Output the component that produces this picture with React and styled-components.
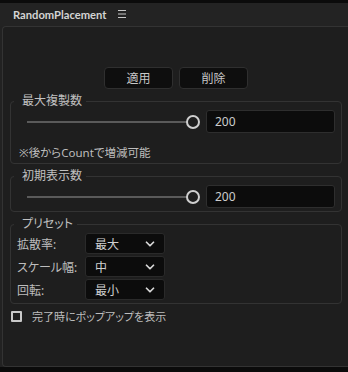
import styled, { createGlobalStyle } from "styled-components";
import { ChevronDown } from "lucide-react";

const GlobalStyle = createGlobalStyle`
  html, body {
    margin: 0;
    padding: 0;
    background: #0b0b0b;
    overflow: hidden;
  }
  * {
    box-sizing: border-box;
  }
`;

const presets = [
  { label: "拡散率:", value: "最大" },
  { label: "スケール幅:", value: "中" },
  { label: "回転:", value: "最小" },
];

function App() {
  return (
    <>
      <GlobalStyle />
      <StyledRoot>
        <StyledTopStrip />
        <StyledHeader>
          <StyledTitle>RandomPlacement</StyledTitle>
          <StyledMenuIcon viewBox="0 0 8 8">
            <path d="M0 0.5H8M0 4H8M0 7.5H8" stroke="#c8c8c8" strokeWidth="1" />
          </StyledMenuIcon>
        </StyledHeader>
        <StyledPanel>
          <StyledButtonRow>
            <StyledButton>適用</StyledButton>
            <StyledButton>削除</StyledButton>
          </StyledButtonRow>

          <StyledFieldset $pb={2}>
            <StyledLegend>最大複製数</StyledLegend>
            <SliderRow />
            <StyledNote>※後からCountで増減可能</StyledNote>
          </StyledFieldset>

          <StyledFieldset $pb={3}>
            <StyledLegend>初期表示数</StyledLegend>
            <SliderRow />
          </StyledFieldset>

          <StyledFieldset $pb={3}>
            <StyledLegend>プリセット</StyledLegend>
            <StyledPresetList>
              {presets.map((p) => (
                <StyledPresetRow key={p.label}>
                  <StyledPresetLabel>{p.label}</StyledPresetLabel>
                  <StyledSelect>
                    <span>{p.value}</span>
                    <ChevronDown size={14} strokeWidth={3} color="#d8d8d8" />
                  </StyledSelect>
                </StyledPresetRow>
              ))}
            </StyledPresetList>
          </StyledFieldset>

          <StyledCheckRow>
            <StyledCheckbox />
            <StyledCheckLabel>完了時にポップアップを表示</StyledCheckLabel>
          </StyledCheckRow>
        </StyledPanel>
        <StyledBottomStrip />
      </StyledRoot>
    </>
  );
}

function SliderRow() {
  return (
    <StyledSliderRow>
      <StyledTrack />
      <StyledThumb />
      <StyledInput>200</StyledInput>
    </StyledSliderRow>
  );
}

const StyledRoot = styled.div`
  display: flex;
  flex-direction: column;
  width: 348px;
  height: 372px;
  background: #222222;
  font-family: "Noto Sans", "Noto Sans CJK JP", sans-serif;
  font-feature-settings: "palt";
  color: #c8c8c8;
`;

const StyledTopStrip = styled.div`
  height: 3px;
  background: #0b0b0b;
`;

const StyledBottomStrip = styled.div`
  height: 5px;
  background: #0b0b0b;
`;

const StyledHeader = styled.div`
  display: flex;
  align-items: center;
  gap: 11px;
  height: 23px;
  padding: 0 0 1px 13px;
  background: #232323;
`;

const StyledTitle = styled.span`
  font-family: Lato, "Noto Sans", sans-serif;
  font-size: 11.2px;
  font-weight: 700;
  color: #d4d4d4;
`;

const StyledMenuIcon = styled.svg`
  width: 8px;
  height: 8px;
`;

const StyledPanel = styled.div`
  flex: 1;
  display: flex;
  flex-direction: column;
  gap: 4px;
  margin-left: 2px;
  padding: 40px 6px 0 7px;
  background: #1e1e1e;
  border: 1px solid #333333;
  border-right: none;
  border-radius: 4px 0 0 4px;
`;

const StyledButtonRow = styled.div`
  display: flex;
  justify-content: center;
  gap: 6px;
`;

const StyledButton = styled.button`
  width: 69px;
  height: 22px;
  padding: 0;
  background: #0e0e0e;
  border: 1px solid #2f2f2f;
  border-radius: 4px;
  color: #c8c8c8;
  font-family: inherit;
  font-size: 12px;
  cursor: pointer;
`;

const StyledFieldset = styled.fieldset`
  margin: 0;
  padding: 1px 6px ${({ $pb }) => $pb}px 6px;
  border: 1px solid #333333;
  border-radius: 4px;
  min-width: 0;
`;

const StyledLegend = styled.legend`
  margin-left: -3px;
  padding: 0 4px 0 8px;
  font-size: 12px;
  line-height: 16px;
  color: #c0c0c0;
`;

const StyledSliderRow = styled.div`
  display: flex;
  align-items: center;
  padding-left: 10px;
`;

const StyledTrack = styled.div`
  flex: 1 1 0;
  min-width: 0;
  height: 2px;
  margin-right: -1px;
  background: #5a5a5a;
`;

const StyledThumb = styled.div`
  flex: none;
  width: 14px;
  height: 14px;
  margin-right: 6px;
  border: 2.5px solid #cfcfcf;
  border-radius: 50%;
  background: #1e1e1e;
`;

const StyledInput = styled.div`
  flex: none;
  display: flex;
  align-items: center;
  width: 129px;
  height: 23px;
  padding-left: 8px;
  background: #0c0c0c;
  border: 1px solid #2e2e2e;
  border-radius: 3px;
  font-size: 12px;
  color: #cccccc;
`;

const StyledNote = styled.div`
  margin-top: 12px;
  padding-left: 2px;
  font-size: 11.5px;
  line-height: 16px;
  color: #bdbdbd;
`;

const StyledPresetList = styled.div`
  display: flex;
  flex-direction: column;
  gap: 2px;
`;

const StyledPresetRow = styled.div`
  display: flex;
  align-items: center;
`;

const StyledPresetLabel = styled.span`
  width: 68px;
  font-size: 12px;
  color: #bdbdbd;
`;

const StyledSelect = styled.div`
  display: flex;
  align-items: center;
  justify-content: space-between;
  width: 80px;
  height: 21px;
  padding: 0 7px 0 9px;
  background: #0c0c0c;
  border: 1px solid #2a2a2a;
  border-radius: 3px;
  font-size: 12px;
  color: #d0d0d0;
`;

const StyledCheckRow = styled.div`
  display: flex;
  align-items: center;
  gap: 10px;
  height: 16px;
  padding-left: 1px;
`;

const StyledCheckbox = styled.div`
  width: 11px;
  height: 11px;
  border: 2px solid #c8c8c8;
  border-radius: 1px;
`;

const StyledCheckLabel = styled.span`
  font-size: 11px;
  color: #bdbdbd;
`;

export default App;
